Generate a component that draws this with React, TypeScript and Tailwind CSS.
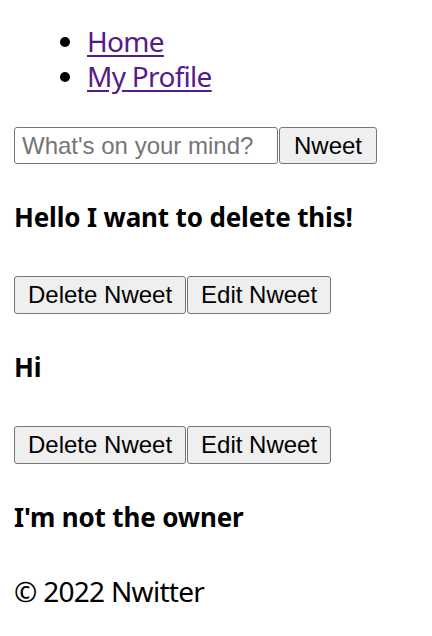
import React, { useState } from 'react';

interface Nweet {
    id: string;
    text: string;
    isOwner: boolean;
}

const nweets: Nweet[] = [
    { id: '1', text: 'Hello I want to delete this!', isOwner: true },
    { id: '2', text: 'Hi', isOwner: true },
    { id: '3', text: "I'm not the owner", isOwner: false },
];

const btn =
    "h-[38px] px-[13px] bg-[#efefef] border border-[#767676] rounded-[3px] text-black text-[24px] leading-none font-['Liberation_Sans',Arial,sans-serif]";

const App: React.FC = () => {
    const [nweet, setNweet] = useState('');

    return (
        <div className="min-h-screen bg-white text-black px-[14px] font-['Noto_Sans',sans-serif]">
            <nav>
                <ul className="mt-[24px] pl-[73px] list-disc text-[28px] leading-[35px] tracking-[-0.7px]">
                    <li>
                        <a href="#/" className="text-[#551a8b] underline underline-offset-[3px]">Home</a>
                    </li>
                    <li>
                        <a href="#/profile" className="text-[#551a8b] underline underline-offset-[3px]">My Profile</a>
                    </li>
                </ul>
            </nav>

            <form className="mt-[33px] flex h-[37px]" onSubmit={(e) => e.preventDefault()}>
                <input
                    type="text"
                    value={nweet}
                    onChange={(e) => setNweet(e.target.value)}
                    placeholder="What's on your mind?"
                    maxLength={120}
                    className="w-[264px] h-full px-[7px] border border-[#767676] rounded-[3px] text-[24px] font-['Liberation_Sans',Arial,sans-serif] placeholder-[#757575] outline-none"
                />
                <button type="submit" className={`${btn} ml-[1px] !h-full !px-[14px]`}>Nweet</button>
            </form>

            <div className="mt-[36px] flex flex-col">
                {nweets.map((n) => (
                    <div key={n.id} className="flex flex-col">
                        <h4 className="text-[26px] leading-[35px] font-bold tracking-[-0.15px]">{n.text}</h4>
                        {n.isOwner && (
                            <div className="flex mt-[41px] mb-[36px]">
                                <button className={btn}>Delete Nweet</button>
                                <button className={`${btn} ml-[1px]`}>Edit Nweet</button>
                            </div>
                        )}
                    </div>
                ))}
            </div>

            <footer className="mt-[39px] text-[28px] leading-[35px] tracking-[-0.7px]">&copy; 2022 Nwitter</footer>
        </div>
    );
};

export default App;
